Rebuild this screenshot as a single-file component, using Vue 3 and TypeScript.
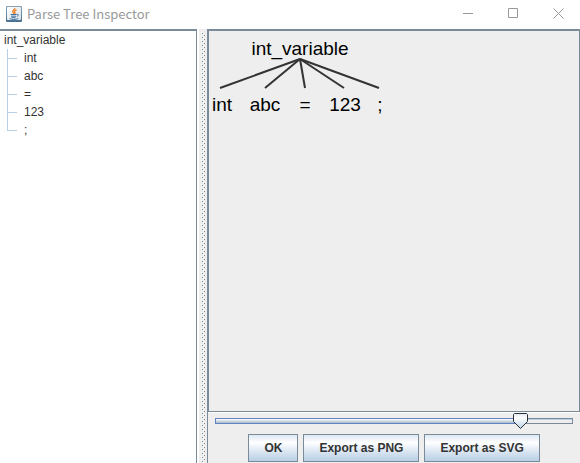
<script setup lang="ts">
import { computed, ref } from 'vue'

interface TreeNode {
  label: string
  x: number
  edge: number
}

const root: TreeNode = { label: 'int_variable', x: 91, edge: 91 }
const leaves: TreeNode[] = [
  { label: 'int', x: 13, edge: 11 },
  { label: 'abc', x: 56, edge: 56 },
  { label: '=', x: 96, edge: 96 },
  { label: '123', x: 136, edge: 135 },
  { label: ';', x: 171, edge: 170 },
]

const zoom = ref(87)
const knobWidth = 15
const knobLeft = computed(
  () => `calc((100% - ${knobWidth}px) * ${zoom.value / 100})`,
)
</script>

<template>
  <div class="window">
    <header class="titlebar">
      <svg class="logo" width="16" height="16" viewBox="0 0 16 16" aria-hidden="true">
        <defs>
          <linearGradient id="logo-bg" x1="0" y1="0" x2="0" y2="1">
            <stop offset="0" stop-color="#8ca5b8" />
            <stop offset="1" stop-color="#466f91" />
          </linearGradient>
          <linearGradient id="logo-face" x1="0" y1="0" x2="1" y2="1">
            <stop offset="0" stop-color="#ffffff" />
            <stop offset="1" stop-color="#d9e1e8" />
          </linearGradient>
        </defs>
        <rect width="16" height="16" rx="1" fill="url(#logo-bg)" />
        <rect x="1" y="1" width="14" height="13" rx="1" fill="url(#logo-face)" />
        <path d="M8.8 2C9.4 3.6 5.6 4.3 6.9 6.2L7.9 7.7M10.6 3.8C8.2 4.7 8.1 5.6 9 6.6 9.3 7.2 8.9 7.6 8.5 8" fill="none" stroke="#ee7d1a" stroke-width="1.3" />
        <path d="M4.5 8.5H10.5M5 10.2H10M5.5 11.7H9.5M10.7 8.4C12.8 7.8 12.9 9.7 10.8 10.4M3.5 12.6C4.8 13.7 10.8 13.7 12.2 12.5" fill="none" stroke="#3f709b" stroke-width="1" />
      </svg>
      <h1 class="title">Parse Tree Inspector</h1>
      <div class="controls">
        <button class="control" type="button" aria-label="Minimize">
          <svg width="11" height="11" viewBox="0 0 11 11"><path d="M0 5.5H10" /></svg>
        </button>
        <button class="control" type="button" aria-label="Maximize">
          <svg width="11" height="11" viewBox="0 0 11 11"><path d="M.5 .5H9.5V9.5H.5Z" /></svg>
        </button>
        <button class="control" type="button" aria-label="Close">
          <svg width="11" height="11" viewBox="0 0 11 11"><path d="M.5 .5L10.5 10.5M10.5 .5L.5 10.5" /></svg>
        </button>
      </div>
    </header>

    <main class="split">
      <nav class="outline">
        <div class="row">{{ root.label }}</div>
        <ul class="branch">
          <li v-for="leaf in leaves" :key="leaf.label" class="row leaf">{{ leaf.label }}</li>
        </ul>
      </nav>
      <div class="divider" role="separator">
        <svg width="4" height="100%" aria-hidden="true">
          <defs>
            <pattern id="bumps" width="4" height="4" patternUnits="userSpaceOnUse">
              <rect width="1" height="1" fill="#fff" />
              <rect x="1" y="1" width="1" height="1" fill="#7a8a99" />
              <rect x="2" y="2" width="1" height="1" fill="#fff" />
              <rect x="3" y="3" width="1" height="1" fill="#7a8a99" />
            </pattern>
          </defs>
          <rect width="4" height="100%" fill="url(#bumps)" />
        </svg>
      </div>
      <section class="viewer">
        <div class="canvas">
          <svg class="diagram" width="180" height="90" viewBox="0 0 180 90">
            <path
              v-for="leaf in leaves"
              :key="leaf.label"
              class="edge"
              :d="`M${root.edge} 28L${leaf.edge} 57`"
            />
            <text :x="root.x" y="24">{{ root.label }}</text>
            <text v-for="leaf in leaves" :key="leaf.label" :x="leaf.x" y="80">{{ leaf.label }}</text>
          </svg>
        </div>
        <div class="slider">
          <div class="track">
            <div class="fill" :style="{ width: zoom + '%' }"></div>
          </div>
          <input v-model.number="zoom" type="range" min="0" max="100" aria-label="Zoom" />
          <svg class="knob" :style="{ left: knobLeft }" width="15" height="16" viewBox="0 0 15 16" aria-hidden="true">
            <defs>
              <linearGradient id="knob-face" x1="0" y1="0" x2="0" y2="1">
                <stop offset="0" stop-color="#dde8f3" />
                <stop offset=".3" stop-color="#ffffff" />
                <stop offset="1" stop-color="#b8cfe5" />
              </linearGradient>
            </defs>
            <path d="M1.5 .5H13.5L14.5 1.5V8.5L7.5 15.5L.5 8.5V1.5Z" fill="url(#knob-face)" stroke="#2b3036" />
          </svg>
        </div>
        <div class="actions">
          <button type="button">OK</button>
          <button type="button">Export as PNG</button>
          <button type="button">Export as SVG</button>
        </div>
      </section>
    </main>
  </div>
</template>

<style>
body {
  margin: 0;
}
</style>

<style scoped>
* {
  box-sizing: border-box;
}

.window {
  display: flex;
  flex-direction: column;
  height: 100vh;
  overflow: hidden;
  background: #eeeeee;
  color: #333333;
  font-family: "Liberation Sans", Arial, sans-serif;
  font-size: 12px;
}

.titlebar {
  display: flex;
  align-items: center;
  flex: none;
  height: 29px;
  padding: 0 0 2px 6px;
  background: #ffffff;
}

.logo {
  flex: none;
}

.title {
  flex: 1;
  margin: 0 0 0 5px;
  color: #999999;
  font: 400 13px/16px "Noto Sans CJK SC", "Noto Sans", sans-serif;
}

.controls {
  display: flex;
  margin-right: -1px;
}

.control {
  display: flex;
  align-items: center;
  justify-content: center;
  width: 45px;
  height: 27px;
  padding: 0;
  border: 0;
  background: none;
}

.control path {
  fill: none;
  stroke: #999999;
}

.split {
  display: flex;
  flex: 1;
  min-height: 0;
}

.outline {
  flex: 0 0 34%;
  border-top: 2px solid #7a8a99;
  border-right: 1px solid #7a8a99;
  background: #ffffff;
}

.row {
  height: 18px;
  padding-left: 4px;
  line-height: 18px;
}

.branch {
  margin: 0;
  padding: 0 0 0 7px;
  list-style: none;
}

.leaf {
  position: relative;
  padding-left: 17px;
}

.leaf::before {
  content: "";
  position: absolute;
  top: 0;
  left: 0;
  box-sizing: border-box;
  width: 10px;
  height: 10px;
  border-bottom: 1px solid #b8cfe5;
  border-left: 1px solid #b8cfe5;
}

.leaf:not(:last-child)::after {
  content: "";
  position: absolute;
  top: 0;
  left: 0;
  height: 18px;
  border-left: 1px solid #b8cfe5;
}

.divider {
  display: flex;
  flex: 0 0 10px;
  padding: 3px 0 0 2px;
  border-left: 2px solid #ffffff;
}

.viewer {
  display: flex;
  flex: 1;
  flex-direction: column;
  min-width: 0;
  border-left: 1px solid #7a8a99;
}

.canvas {
  flex: 1;
  min-height: 0;
  border: 1px solid #7a8a99;
  border-top-width: 2px;
  box-shadow: 0 1px #ffffff;
}

.diagram {
  display: block;
  overflow: visible;
}

.diagram text {
  fill: #000000;
  font-size: 19px;
  text-anchor: middle;
}

.edge {
  fill: none;
  stroke: #333333;
  stroke-width: 2;
}

.slider {
  position: relative;
  display: flex;
  align-items: center;
  flex: none;
  height: 16px;
  margin: 1px 7px 0;
}

.track {
  flex: 1;
  height: 6px;
  border: 1px solid #7a8a99;
  background: linear-gradient(#b8cfe5 0 1px, #eeeeee 1px);
}

.fill {
  height: 6px;
  margin: -1px 0 0 -1px;
  border: 1px solid #6382bf;
  background: linear-gradient(#ffffff, #a3b8cc);
}

.slider input {
  position: absolute;
  inset: 0;
  width: 100%;
  margin: 0;
  opacity: 0;
}

.knob {
  position: absolute;
  top: 0;
  pointer-events: none;
}

.actions {
  display: flex;
  justify-content: center;
  flex: none;
  gap: 5px;
  padding: 5px 0 1px;
}

.actions button {
  height: 28px;
  padding: 0 15px;
  border: 1px solid #7a8a99;
  background: linear-gradient(#dde8f3, #ffffff 30%, #dde8f3 60%, #b8cfe5);
  color: #333333;
  font: 700 12px/16px "Liberation Sans", Arial, sans-serif;
  white-space: nowrap;
}
</style>
